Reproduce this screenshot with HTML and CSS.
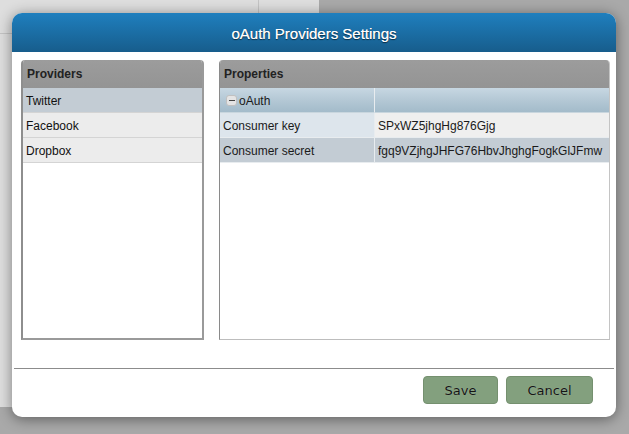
FILE: index.html
```html
<!DOCTYPE html>
<html>
<head>
<meta charset="utf-8">
<link rel="stylesheet" href="styles.css">
</head>
<body>
<div class="backdrop">
  <div class="bd-vline"></div>
  <div class="bd-hline"></div>
</div>
<div class="dialog">
  <div class="dialog-header">oAuth Providers Settings</div>
  <div class="dialog-body">
    <div class="panel providers">
      <div class="panel-head">Providers</div>
      <div class="list">
        <div class="list-row selected">Twitter</div>
        <div class="list-row">Facebook</div>
        <div class="list-row">Dropbox</div>
      </div>
    </div>
    <div class="panel properties">
      <div class="panel-head">Properties</div>
      <div class="grid">
        <div class="cell group-cell"><span class="toggle"><span class="toggle-bar"></span></span>oAuth</div>
        <div class="cell group-cell"></div>
        <div class="cell key">Consumer key</div>
        <div class="cell val">SPxWZ5jhgHg876Gjg</div>
        <div class="cell key sel">Consumer secret</div>
        <div class="cell val sel">fgq9VZjhgJHFG76HbvJhghgFogkGlJFmw</div>
      </div>
    </div>
  </div>
  <div class="dialog-sep"></div>
  <div class="dialog-footer">
    <button class="btn">Save</button>
    <button class="btn">Cancel</button>
  </div>
</div>
</body>
</html>
```
FILE: styles.css
```css
html, body {
  margin: 0;
  padding: 0;
}
body {
  width: 629px;
  height: 434px;
  overflow: hidden;
  background: #a9a9a9;
  position: relative;
  font-family: "Liberation Sans", Arial, sans-serif;
}
.backdrop {
  position: absolute;
  left: 0;
  top: 0;
  width: 319px;
  height: 407px;
  background: #dedede;
}
.bd-vline {
  position: absolute;
  left: 258px;
  top: 0;
  width: 1px;
  height: 34px;
  background: #c4c4c4;
}
.bd-hline {
  position: absolute;
  left: 0;
  top: 33px;
  width: 20px;
  height: 1px;
  background: #c4c4c4;
}
.dialog {
  position: absolute;
  left: 12px;
  top: 13px;
  width: 604px;
  height: 404px;
  background: #fff;
  border-radius: 10px;
  overflow: hidden;
  box-shadow: 0 2px 14px rgba(0, 0, 0, 0.45);
  display: flex;
  flex-direction: column;
}
.dialog-header {
  height: 39px;
  flex: none;
  background: linear-gradient(#1f7fbe, #175d8c);
  color: #fff;
  font-size: 15px;
  display: flex;
  align-items: center;
  justify-content: center;
  padding-top: 1px;
  box-sizing: border-box;
  text-shadow: 0 1px 1px rgba(0, 0, 0, 0.6), 0 0 0.4px #fff;
}
.dialog-body {
  display: flex;
  padding: 8px 6px 0 9px;
  gap: 15px;
  height: 280px;
  flex: none;
}
.panel {
  display: flex;
  flex-direction: column;
  border-radius: 4px 4px 0 0;
  overflow: hidden;
  background: #fff;
}
.providers {
  width: 179px;
  border: 2px solid #9a9a9a;
  border-top: none;
  border-left-color: #8e8e8e;
}
.properties {
  flex: 1;
  border-left: 1px solid #8a8a8a;
  border-right: 1px solid #c4c4c4;
  border-bottom: 1px solid #bdbdbd;
}
.panel-head {
  height: 28px;
  flex: none;
  background: linear-gradient(#9c9c9c, #949494);
  color: #222;
  font-weight: bold;
  font-size: 12px;
  display: flex;
  align-items: center;
  padding-left: 4px;
  box-sizing: border-box;
  padding-bottom: 1px;
}
.providers .panel-head {
  margin: 0 -2px;
  padding-left: 6px;
}
.list-row {
  height: 25px;
  box-sizing: border-box;
  border-bottom: 1px solid #d4d4d4;
  background: #ececec;
  color: #111;
  font-size: 12px;
  display: flex;
  align-items: center;
  padding: 1px 0 0 3px;
}
.list-row.selected {
  background: #c3ccd4;
}
.grid {
  display: grid;
  grid-template-columns: 155px 1fr;
}
.cell {
  height: 25px;
  box-sizing: border-box;
  border-bottom: 1px solid #e8ecef;
  font-size: 12px;
  color: #1a1a1a;
  display: flex;
  align-items: center;
  white-space: nowrap;
  overflow: hidden;
  padding-top: 1px;
}
.cell:nth-child(odd) {
  border-right: 1px solid #e8ecef;
  padding-left: 3px;
}
.cell:nth-child(even) {
  padding-left: 3px;
}
.group-cell {
  background: linear-gradient(#c7d7e2, #b4c8d5 50%, #a3bbca);
  border-bottom-color: #c9d6de;
}
.key {
  background: #dde5ec;
}
.val {
  background: #efefef;
}
.sel {
  background: #c3ccd4;
}
.toggle {
  width: 9px;
  height: 9px;
  border-radius: 3px;
  background: #e4e4e4;
  border: 1px solid #c0c0c0;
  margin: 0 2px 0 3px;
  display: flex;
  align-items: center;
  justify-content: center;
}
.toggle-bar {
  width: 6px;
  height: 1px;
  background: #444;
}
.dialog-sep {
  height: 1px;
  background: #8c8c8c;
  margin: 28px 2px 0 2px;
  flex: none;
}
.dialog-footer {
  display: flex;
  justify-content: flex-end;
  gap: 8px;
  padding: 7px 23px 0 0;
}
.btn {
  height: 28px;
  padding: 0;
  border: 1px solid #75906f;
  border-radius: 4px;
  background: #83a07e;
  color: #151515;
  font-family: "DejaVu Sans", Verdana, sans-serif;
  font-size: 13px;
  text-shadow: 0 0 1px rgba(255, 255, 255, 0.3);
}
.btn:first-child {
  width: 75px;
}
.btn:last-child {
  width: 87px;
}
```
